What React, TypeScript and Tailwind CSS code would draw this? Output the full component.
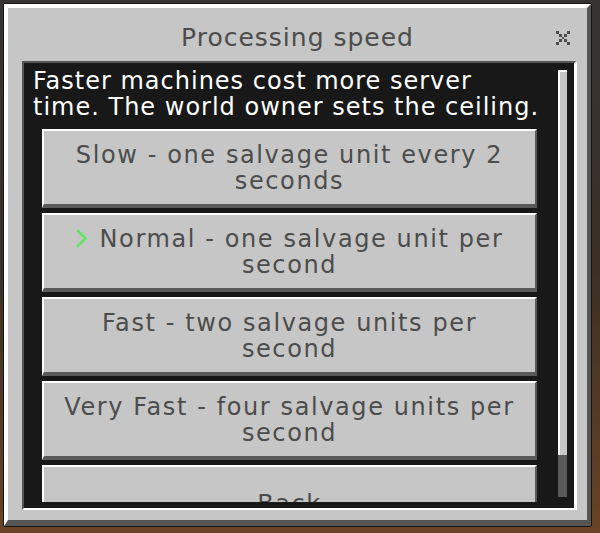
import React from 'react';

type Option = {
  lines: [string, string];
  selected?: boolean;
};

const options: Option[] = [
  { lines: ['Slow - one salvage unit every 2', 'seconds'] },
  { lines: ['Normal - one salvage unit per', 'second'], selected: true },
  { lines: ['Fast - two salvage units per', 'second'] },
  { lines: ['Very Fast - four salvage units per', 'second'] },
];

const CloseIcon: React.FC = () => (
  <svg width="14" height="14" viewBox="0 0 5 5" fill="#4c4c4c" shapeRendering="crispEdges">
    <rect x="0" y="0" width="1" height="1" />
    <rect x="4" y="0" width="1" height="1" />
    <rect x="1" y="1" width="1" height="1" />
    <rect x="3" y="1" width="1" height="1" />
    <rect x="2" y="2" width="1" height="1" />
    <rect x="1" y="3" width="1" height="1" />
    <rect x="3" y="3" width="1" height="1" />
    <rect x="0" y="4" width="1" height="1" />
    <rect x="4" y="4" width="1" height="1" />
  </svg>
);

const Chevron: React.FC = () => (
  <svg width="12" height="19" viewBox="0 0 12 19" className="mr-[12px] shrink-0">
    <polyline points="2,2 9.5,9.5 2,17" fill="none" stroke="#5fe35f" strokeWidth="2.6" strokeLinecap="square" />
  </svg>
);

const FormButton: React.FC<{ children: React.ReactNode }> = ({ children }) => (
  <button className="flex h-[79px] w-[495px] shrink-0 flex-col items-center justify-center border-t-2 border-l-2 border-r-2 border-b-4 border-t-white border-l-white border-r-[#5a5a5a] border-b-[#5a5a5a] bg-[#c6c6c6] text-center text-[24px] leading-[26px] tracking-[1.6px] text-[#4c4c4c]">
    {children}
  </button>
);

const App: React.FC = () => {
  return (
    <div className="h-[533px] w-[600px] overflow-hidden bg-linear-to-b from-[#353433] via-[#3b2f25] to-[#6a4323] pt-[3px] pl-[3px] pr-[8px] pb-[6px] font-['DejaVu_Sans','Liberation_Sans',sans-serif]">
      <div className="flex h-full flex-col rounded-[2px] border border-[#141414]">
        <div className="flex min-h-0 flex-1 flex-col border-t-4 border-l-4 border-r-4 border-b-[6px] border-t-white border-l-white border-r-[#555555] border-b-[#555555] bg-[#c6c6c6] pb-[10px]">
          {/* title bar */}
          <div className="grid h-[53px] shrink-0 grid-cols-[1fr_auto_1fr] items-center pt-[6px]">
            <div />
            <h1 className="whitespace-nowrap text-[25px] leading-[30px] tracking-[1px] text-[#4c4c4c]">
              Processing speed
            </h1>
            <div className="mr-[17px] flex justify-end">
              <CloseIcon />
            </div>
          </div>

          {/* body */}
          <div className="mr-[10px] ml-[14px] flex min-h-0 flex-1 border-t-2 border-l-2 border-r-[3px] border-b-2 border-t-[#555555] border-l-[#555555] border-r-white border-b-white bg-[#181818] pb-[6px]">
            <div className="min-h-0 flex-1 overflow-hidden pt-[5px] pl-[9px]">
              <p className="whitespace-nowrap text-[24px] leading-[26px] tracking-[1px] text-white">
                Faster machines cost more server
                <br />
                time. The world owner sets the ceiling.
              </p>
              <div className="mt-[9px] ml-[9px] flex flex-col gap-[5px]">
                {options.map((o) => (
                  <FormButton key={o.lines[0]}>
                    <span className="flex items-center whitespace-nowrap">
                      {o.selected && <Chevron />}
                      {o.lines[0]}
                    </span>
                    <span className="whitespace-nowrap">{o.lines[1]}</span>
                  </FormButton>
                ))}
                <FormButton>
                  <span>Back</span>
                </FormButton>
              </div>
            </div>

            {/* scrollbar */}
            <div className="mt-[7px] mr-[7px] mb-[5px] flex w-[9px] flex-col bg-[#5a5a5a]">
              <div className="h-[385px] border-t-2 border-l-2 border-t-white border-l-white bg-[#c6c6c6]" />
            </div>
          </div>
        </div>
      </div>
    </div>
  );
};

export default App;
